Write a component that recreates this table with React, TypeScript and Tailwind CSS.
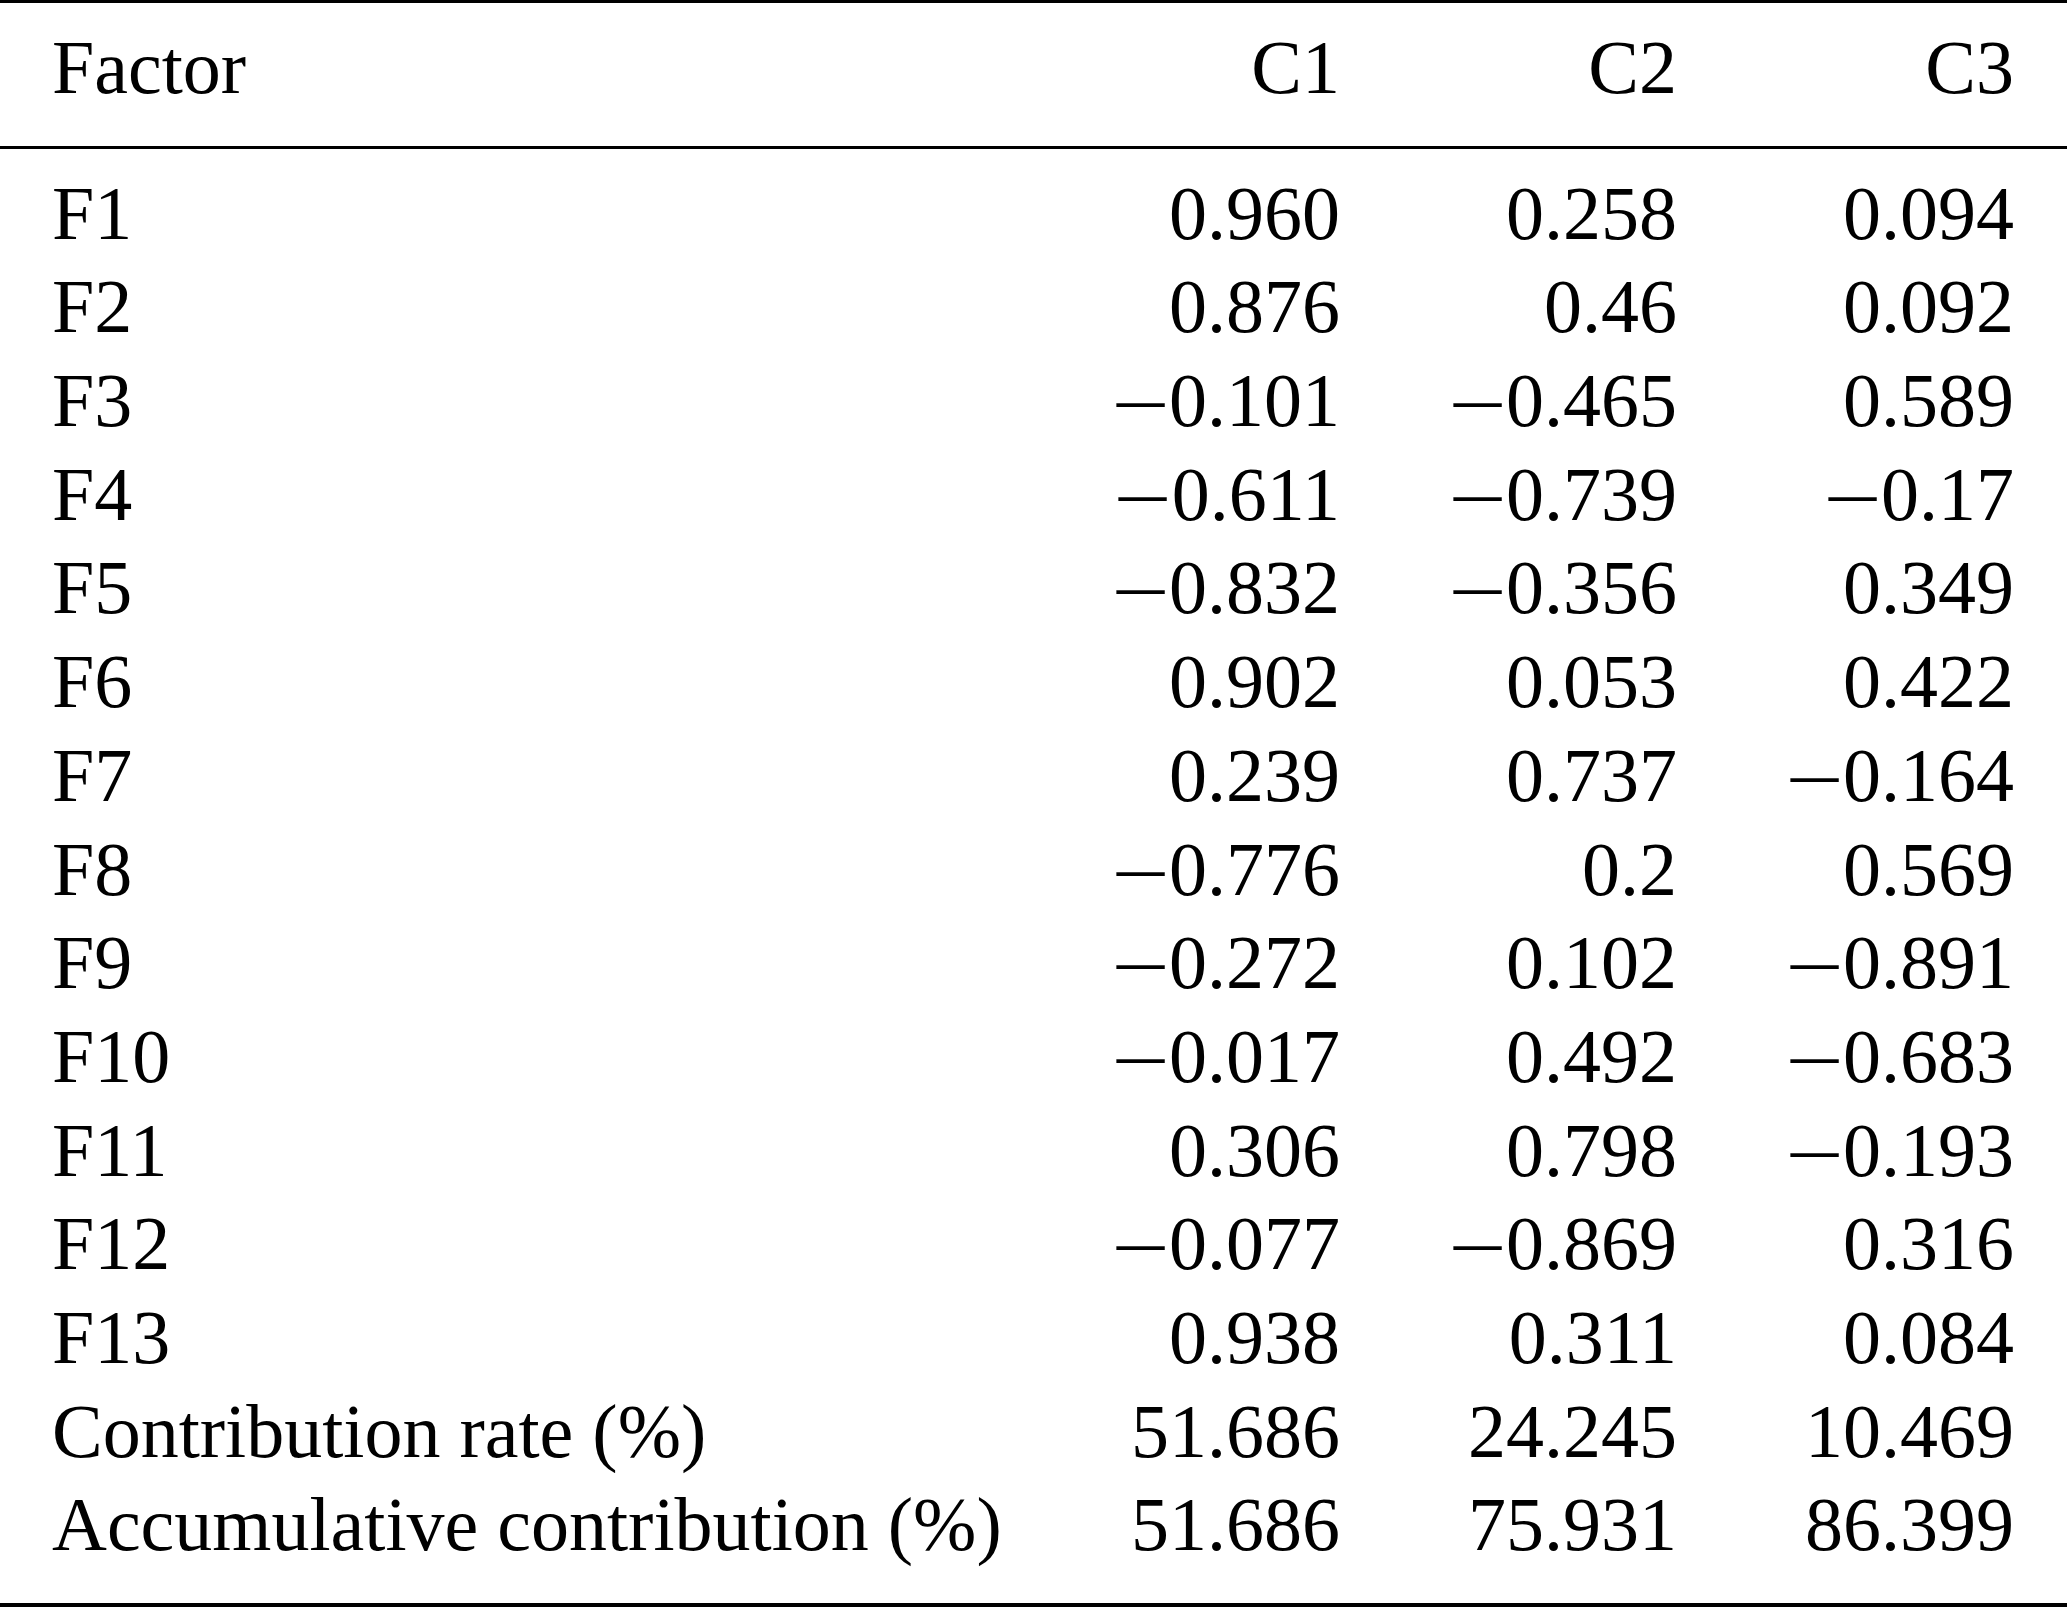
import React from "react";

type Row = [string, string, string, string];

const rows: Row[] = [
  ["F1", "0.960", "0.258", "0.094"],
  ["F2", "0.876", "0.46", "0.092"],
  ["F3", "-0.101", "-0.465", "0.589"],
  ["F4", "-0.611", "-0.739", "-0.17"],
  ["F5", "-0.832", "-0.356", "0.349"],
  ["F6", "0.902", "0.053", "0.422"],
  ["F7", "0.239", "0.737", "-0.164"],
  ["F8", "-0.776", "0.2", "0.569"],
  ["F9", "-0.272", "0.102", "-0.891"],
  ["F10", "-0.017", "0.492", "-0.683"],
  ["F11", "0.306", "0.798", "-0.193"],
  ["F12", "-0.077", "-0.869", "0.316"],
  ["F13", "0.938", "0.311", "0.084"],
  ["Contribution rate (%)", "51.686", "24.245", "10.469"],
  ["Accumulative contribution (%)", "51.686", "75.931", "86.399"],
];

// TeX-style minus: a long bar, wider than the font's own glyph
function Num({ value }: { value: string }) {
  if (value.startsWith("-")) {
    return (
      <span>
        <span className="inline-block w-[0.69em] text-left">
          <span className="inline-block origin-left scale-x-[1.24] -translate-y-[3px]">–</span>
        </span>
        {value.slice(1)}
      </span>
    );
  }
  return <span>{value}</span>;
}

function TableRow({ cells }: { cells: Row }) {
  return (
    <div className="grid grid-cols-[1fr_337px_337px_337px] h-[93.7px] leading-[93.7px]">
      <div className="whitespace-nowrap">{cells[0]}</div>
      <div className="text-right whitespace-nowrap">
        <Num value={cells[1]} />
      </div>
      <div className="text-right whitespace-nowrap">
        <Num value={cells[2]} />
      </div>
      <div className="text-right whitespace-nowrap">
        <Num value={cells[3]} />
      </div>
    </div>
  );
}

export default function App() {
  return (
    <div
      className="w-[2067px] h-[1607px] bg-white text-black text-[76px] overflow-hidden"
      style={{ fontFamily: '"Liberation Serif", "Times New Roman", serif' }}
    >
      <div className="border-t-[3px] border-black" />

      {/* Header */}
      <div className="pl-[52px] pr-[53px] pt-[18px] pb-[31px] border-b-[3px] border-black">
        <div className="grid grid-cols-[1fr_337px_337px_337px] h-[93.7px] leading-[93.7px]">
          <div>Factor</div>
          <div className="text-right">C1</div>
          <div className="text-right">C2</div>
          <div className="text-right">C3</div>
        </div>
      </div>

      {/* Body */}
      <div className="pl-[52px] pr-[53px] pt-[18px] pb-[31px] border-b-4 border-black">
        {rows.map((r) => (
          <TableRow key={r[0]} cells={r} />
        ))}
      </div>
    </div>
  );
}
